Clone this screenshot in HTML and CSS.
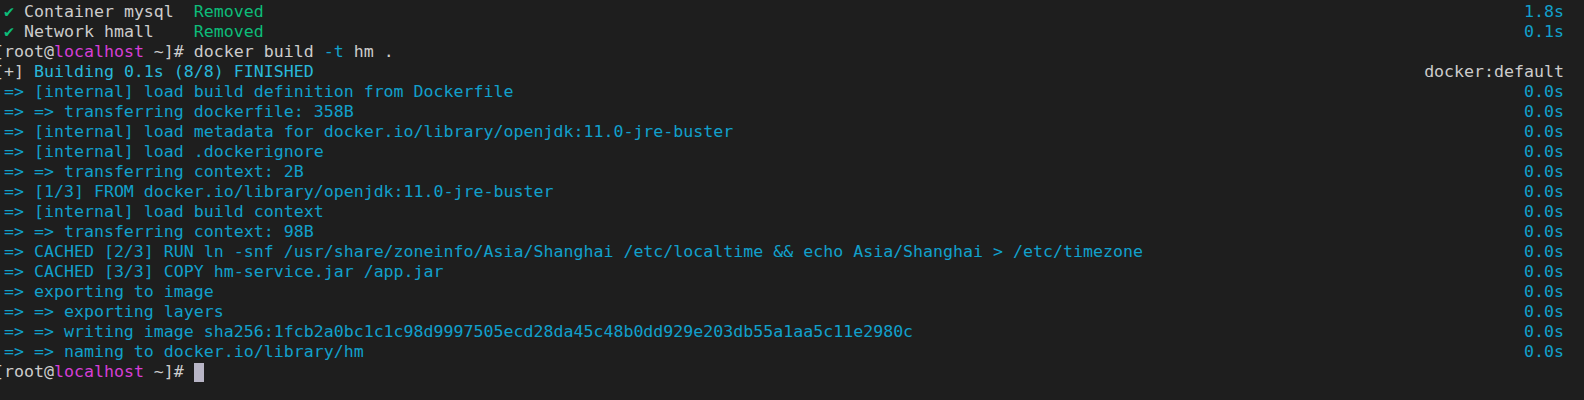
FILE: index.html
```html
<!DOCTYPE html>
<html>
<head>
<meta charset="utf-8">
<link rel="stylesheet" href="styles.css">
</head>
<body>
<div class="term">
  <div class="row"><span class="l"> <span class="g">✔</span> Container mysql  <span class="g">Removed</span></span><span class="r c">1.8s</span></div>
  <div class="row"><span class="l"> <span class="g">✔</span> Network hmall    <span class="g">Removed</span></span><span class="r c">0.1s</span></div>
  <div class="row"><span class="l">[root@<span class="m">localhost</span> ~]# docker build <span class="c">-t</span> hm .</span></div>
  <div class="row"><span class="l">[+] <span class="bc">Building 0.1s (8/8) FINISHED</span></span><span class="r">docker:default</span></div>
  <div class="row c"><span class="l"> =&gt; [internal] load build definition from Dockerfile</span><span class="r">0.0s</span></div>
  <div class="row c"><span class="l"> =&gt; =&gt; transferring dockerfile: 358B</span><span class="r">0.0s</span></div>
  <div class="row c"><span class="l"> =&gt; [internal] load metadata for docker.io/library/openjdk:11.0-jre-buster</span><span class="r">0.0s</span></div>
  <div class="row c"><span class="l"> =&gt; [internal] load .dockerignore</span><span class="r">0.0s</span></div>
  <div class="row c"><span class="l"> =&gt; =&gt; transferring context: 2B</span><span class="r">0.0s</span></div>
  <div class="row c"><span class="l"> =&gt; [1/3] FROM docker.io/library/openjdk:11.0-jre-buster</span><span class="r">0.0s</span></div>
  <div class="row c"><span class="l"> =&gt; [internal] load build context</span><span class="r">0.0s</span></div>
  <div class="row c"><span class="l"> =&gt; =&gt; transferring context: 98B</span><span class="r">0.0s</span></div>
  <div class="row c"><span class="l"> =&gt; CACHED [2/3] RUN ln -snf /usr/share/zoneinfo/Asia/Shanghai /etc/localtime &amp;&amp; echo Asia/Shanghai &gt; /etc/timezone</span><span class="r">0.0s</span></div>
  <div class="row c"><span class="l"> =&gt; CACHED [3/3] COPY hm-service.jar /app.jar</span><span class="r">0.0s</span></div>
  <div class="row c"><span class="l"> =&gt; exporting to image</span><span class="r">0.0s</span></div>
  <div class="row c"><span class="l"> =&gt; =&gt; exporting layers</span><span class="r">0.0s</span></div>
  <div class="row c"><span class="l"> =&gt; =&gt; writing image sha256:1fcb2a0bc1c1c98d9997505ecd28da45c48b0dd929e203db55a1aa5c11e2980c</span><span class="r">0.0s</span></div>
  <div class="row c"><span class="l"> =&gt; =&gt; naming to docker.io/library/hm</span><span class="r">0.0s</span></div>
  <div class="row"><span class="l">[root@<span class="m">localhost</span> ~]# <span class="cursor"> </span></span></div>
</div>
</body>
</html>
```

FILE: styles.css
```css
html, body {
  margin: 0;
  padding: 0;
  background: #1e1e1e;
  height: 100%;
  overflow: hidden;
}
.term {
  margin-left: -6px;
  padding: 2px 20px 0 0;
  font-family: "DejaVu Sans Mono", "Liberation Mono", monospace;
  font-size: 16.6px;
  line-height: 20px;
  color: #cccccc;
}
.row {
  display: flex;
  justify-content: space-between;
  height: 20px;
  white-space: pre;
}
.l, .r {
  white-space: pre;
}
.g { color: #0dbc79; }
.c { color: #11a0cc; }
.bc { color: #29b8db; }
.m { color: #d63ed6; }
.cursor {
  display: inline-block;
  width: 10px;
  height: 19px;
  vertical-align: top;
  margin-top: 1px;
  background: #b8b5c6;
}
```
